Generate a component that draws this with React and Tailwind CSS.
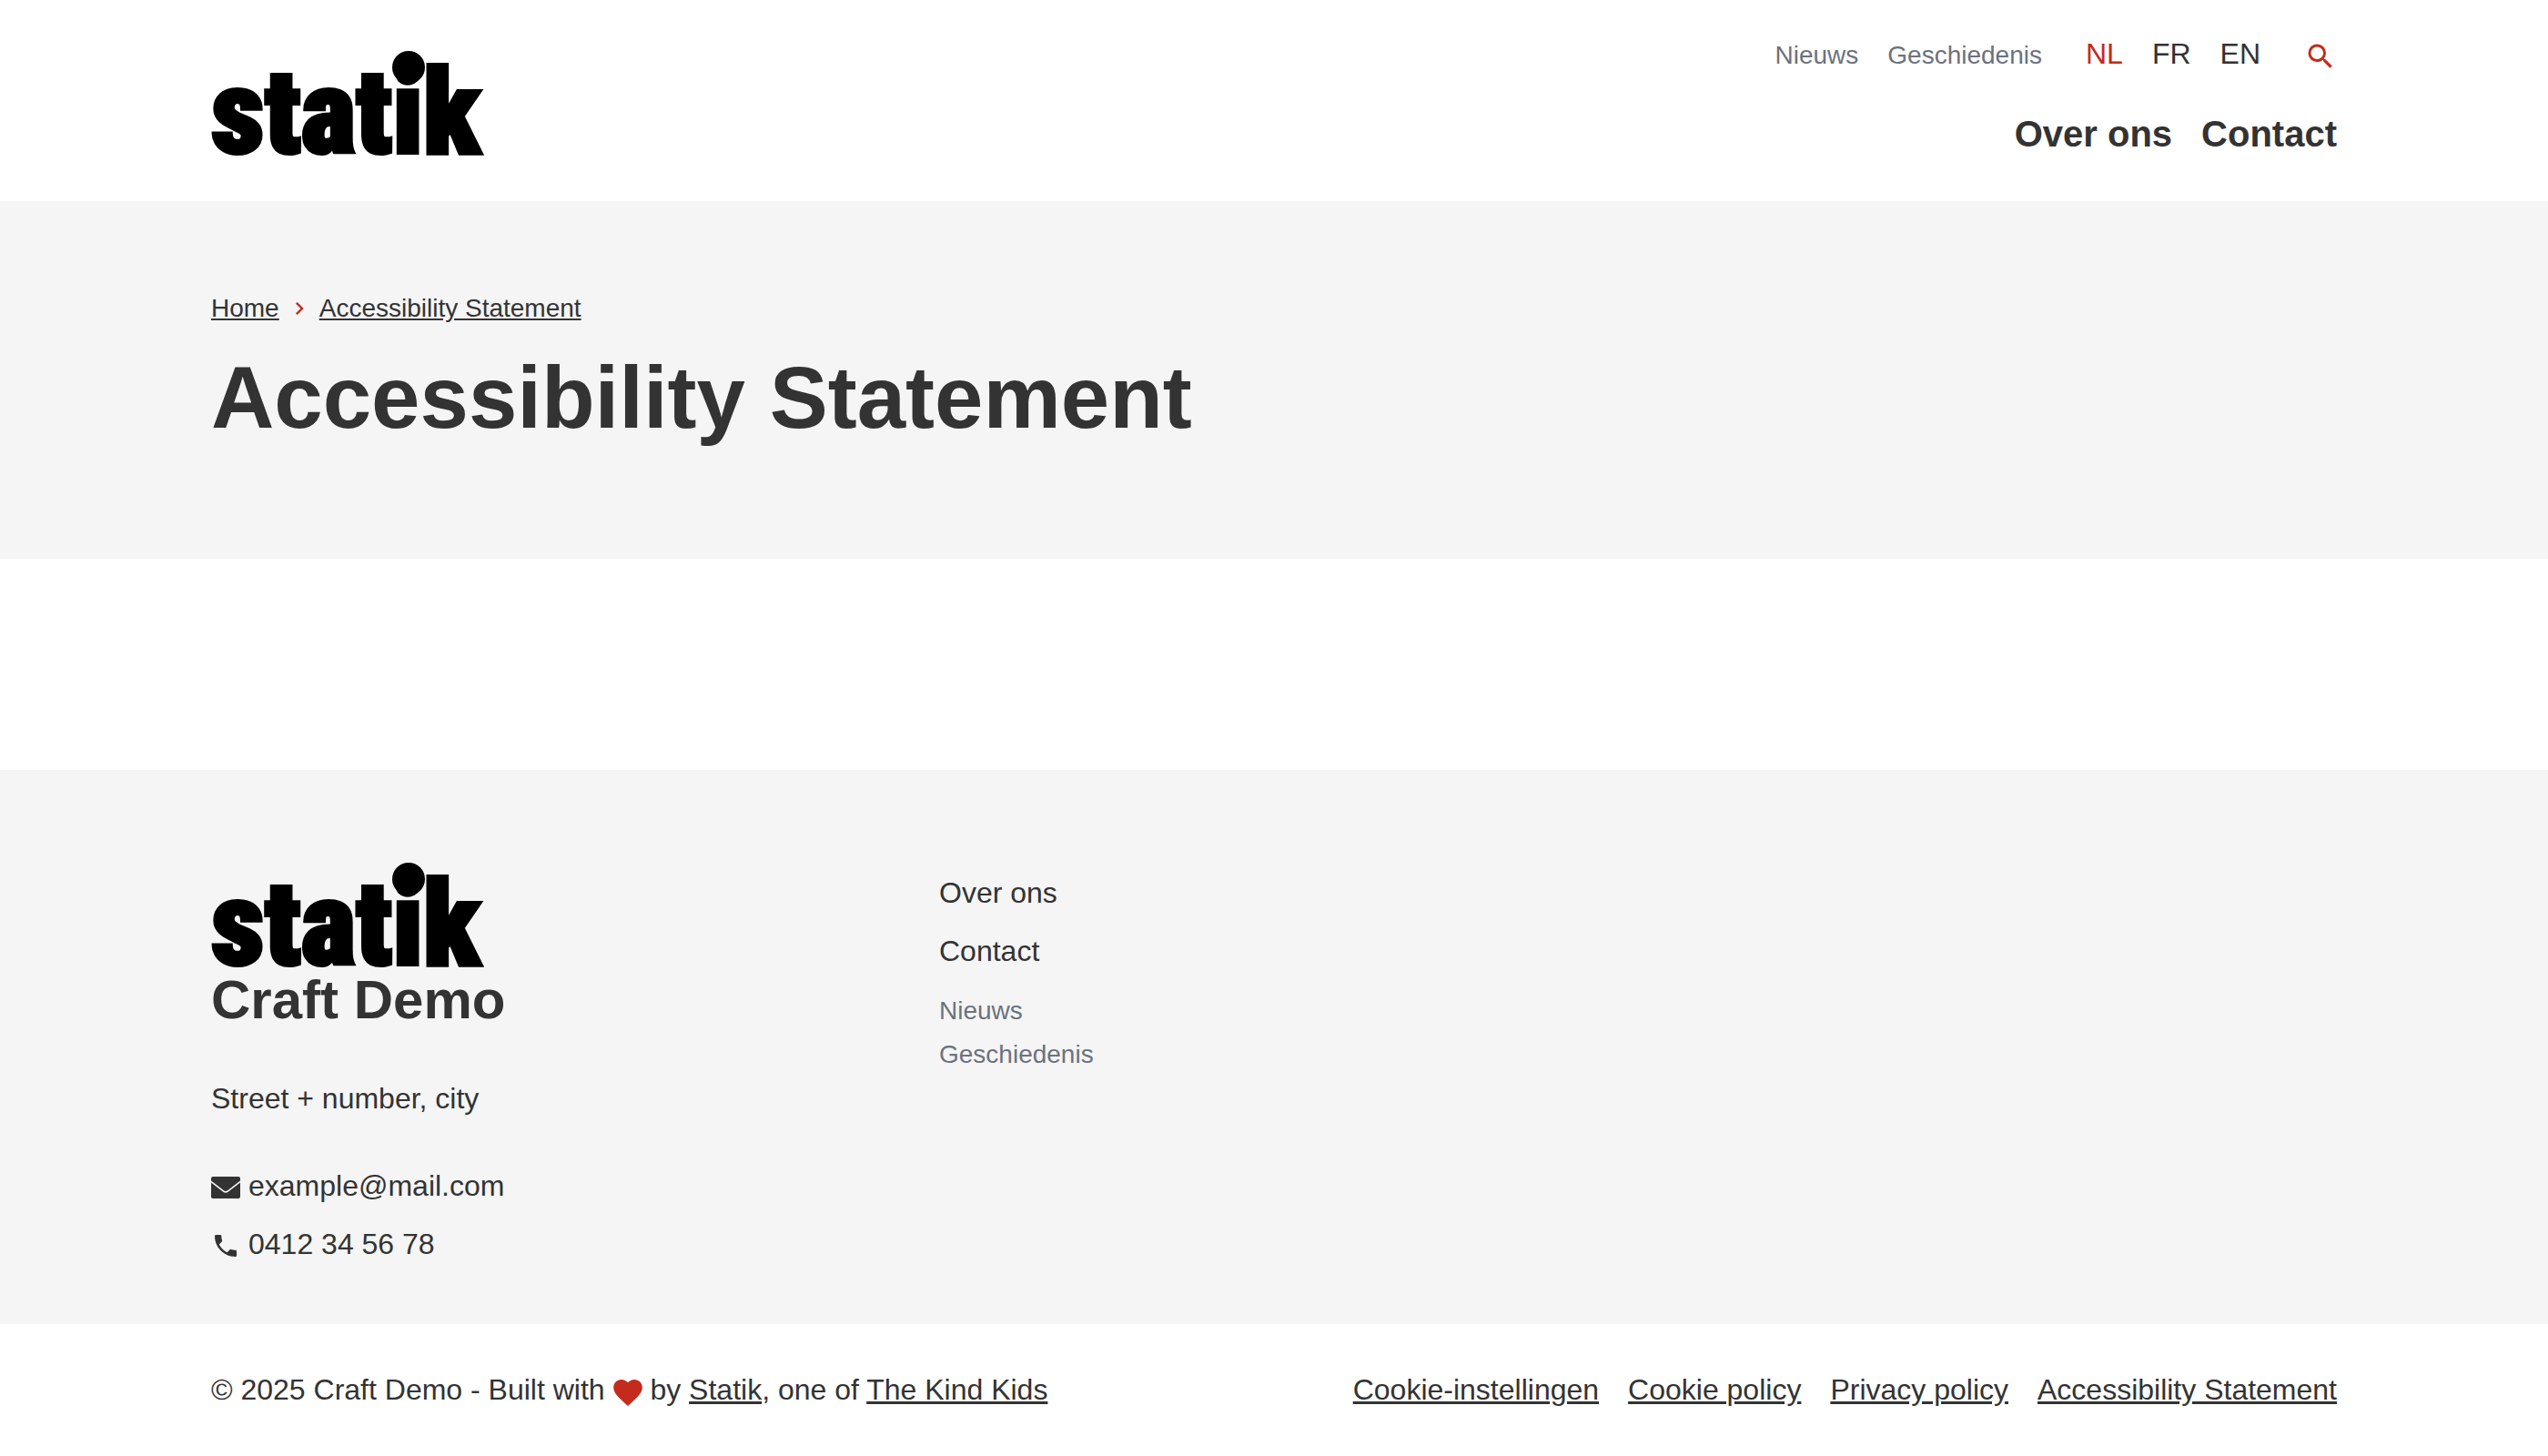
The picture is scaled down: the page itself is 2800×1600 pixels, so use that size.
import { MdSearch, MdChevronRight, MdPhone } from "react-icons/md";

function Logo() {
  return (
    <svg viewBox="0 0 300 118" className="block h-[118px] w-[300px] overflow-visible" role="img" aria-label="statik">
      <text x="0" y="115" fontSize="129" fontWeight="900" fontFamily="'Roboto Condensed', 'Open Sans Condensed', Roboto, sans-serif" stroke="#000" strokeWidth="4">
        statik
      </text>
      <circle cx="217" cy="21" r="18" />
    </svg>
  );
}

function EnvelopeIcon() {
  return (
    <svg viewBox="0 0 32 24" className="mt-1 h-6 w-8" fill="currentColor" aria-hidden="true">
      <path d="M2 0h28a2 2 0 0 1 2 2v2.500L18 15.300q-2 1.400-4 0L0 4.500V2a2 2 0 0 1 2-2z" />
      <path d="M0 6.500L13.600 16.900q2.400 1.600 4.800 0L32 6.500V22a2 2 0 0 1-2 2H2a2 2 0 0 1-2-2z" />
    </svg>
  );
}

function HeartIcon() {
  return (
    <svg viewBox="2 3 20 18.35" className="inline h-[29px] w-8 align-[-7px] text-[#c42b1c]" fill="currentColor" role="img" aria-label="love">
      <path d="M12 21.350l-1.450-1.320C5.400 15.360 2 12.280 2 8.500 2 5.420 4.420 3 7.500 3c1.740 0 3.410.81 4.500 2.090C13.090 3.810 14.760 3 16.500 3 19.580 3 22 5.420 22 8.500c0 3.780-3.400 6.860-8.550 11.540L12 21.350z" />
    </svg>
  );
}

const container = "mx-auto w-full max-w-[2400px] px-8";
const bottomLinks = ["Cookie-instellingen", "Cookie policy", "Privacy policy", "Accessibility Statement"];

export default function App() {
  return (
    <div className="bg-white font-['Liberation_Sans',Arial,sans-serif] text-[32px] leading-[48px] text-[#333333]">
      <header>
        <div className={`${container} flex items-start justify-between pt-[35px] pb-11`}>
          <a href="#home" className="mt-[18px] block"><Logo /></a>
          <div className="flex flex-col items-end gap-8">
            <div className="flex items-baseline gap-12">
              <nav aria-label="Secondary" className="flex gap-8 text-[28px] text-[#6b7280]">
                <a href="#nieuws">Nieuws</a>
                <a href="#geschiedenis">Geschiedenis</a>
              </nav>
              <nav aria-label="Language" className="flex gap-8">
                <a href="#nl" className="text-[#c42b1c]">NL</a>
                <a href="#fr">FR</a>
                <a href="#en">EN</a>
              </nav>
              <button type="button" aria-label="Zoeken" className="mt-1 self-center text-[#c42b1c]">
                <MdSearch className="size-9" />
              </button>
            </div>
            <nav aria-label="Main" className="flex gap-8 text-[40px] leading-[60px] font-bold">
              <a href="#over">Over ons</a>
              <a href="#contact">Contact</a>
            </nav>
          </div>
        </div>
      </header>

      <main>
        <section className="bg-[#f5f5f5]">
          <div className={`${container} pt-[98px] pb-[117px]`}>
            <nav aria-label="Breadcrumb" className="flex items-center gap-2 text-[28px] leading-[40px]">
              <a href="#home" className="underline">Home</a>
              <MdChevronRight className="size-7 text-[#c42b1c]" />
              <a href="#statement" className="underline">Accessibility Statement</a>
            </nav>
            <h1 className="mt-[18px] text-[96px] leading-[120px] font-bold">Accessibility Statement</h1>
          </div>
        </section>
        <div className="h-[232px]" />
      </main>

      <footer>
        <div className="bg-[#f5f5f5]">
          <div className={`${container} grid grid-cols-3 gap-16 pt-[99px] pb-16`}>
            <div>
              <a href="#home" className="block"><Logo /></a>
              <h2 className="text-[60px] leading-[72px] font-bold">Craft Demo</h2>
              <p className="mt-12">Street + number, city</p>
              <div className="mt-12 flex flex-col items-start gap-4">
                <a href="#mail" className="flex items-center gap-[9px]"><EnvelopeIcon />example@mail.com</a>
                <a href="#tel" className="flex items-center gap-[9px]"><MdPhone className="mt-1 size-8" />0412 34 56 78</a>
              </div>
            </div>
            <nav aria-label="Footer" className="flex flex-col items-start pt-3">
              <a href="#over" className="mb-4">Over ons</a>
              <a href="#contact" className="mb-[18px]">Contact</a>
              <a href="#nieuws" className="text-[28px] text-[#6b7280]">Nieuws</a>
              <a href="#geschiedenis" className="text-[28px] text-[#6b7280]">Geschiedenis</a>
            </nav>
          </div>
        </div>
        <div className={`${container} flex items-center justify-between py-12`}>
          <p>
            © 2025 Craft Demo - Built with <HeartIcon /> by{" "}
            <a href="#statik" className="underline">Statik</a>, one of{" "}
            <a href="#kindkids" className="underline">The Kind Kids</a>
          </p>
          <nav aria-label="Legal" className="flex gap-8">
            {bottomLinks.map((label) => (
              <a key={label} href="#legal" className="underline">{label}</a>
            ))}
          </nav>
        </div>
      </footer>
    </div>
  );
}
